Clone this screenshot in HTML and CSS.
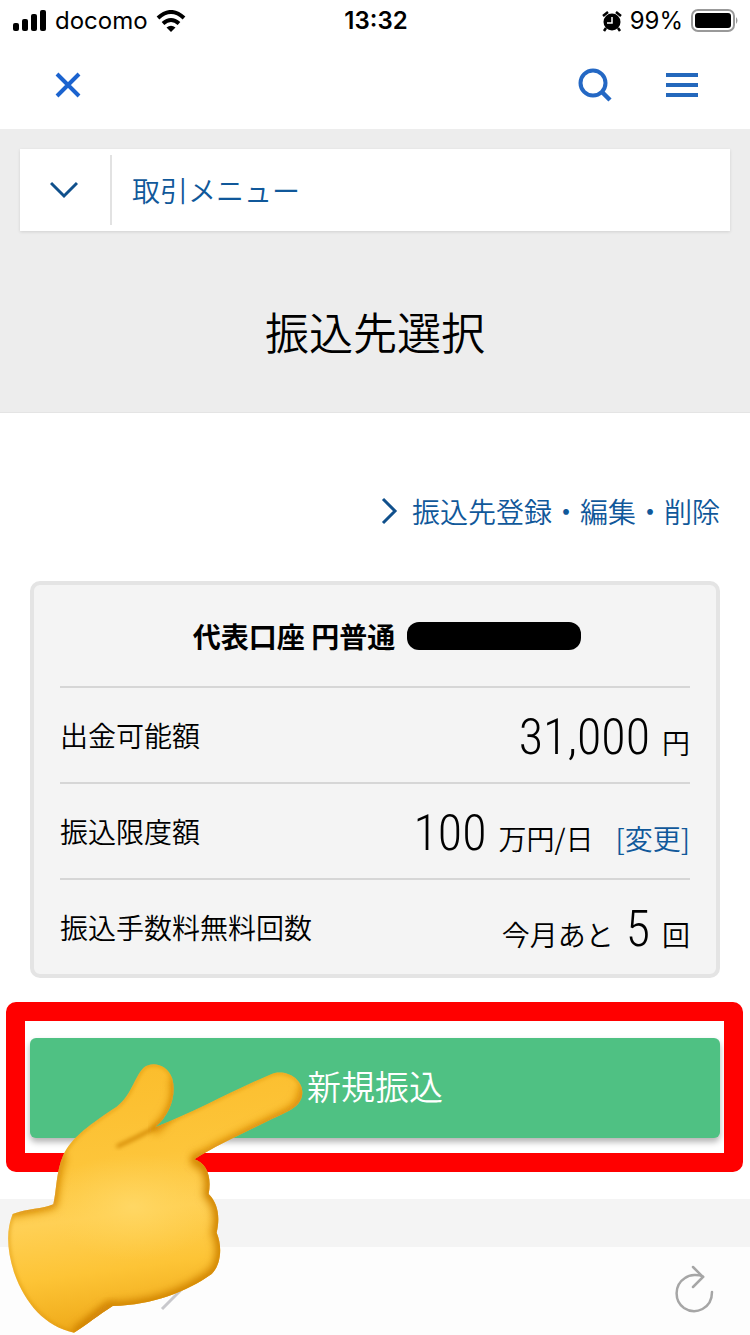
FILE: index.html
```html
<!DOCTYPE html>
<html lang="ja">
<head>
    <meta charset="UTF-8">
    <meta name="viewport" content="width=device-width, initial-scale=1.0">
    <title>振込先選択</title>
    <link rel="stylesheet" href="styles.css">
</head>
<body>
    <div class="status-bar">
        <div class="status-left">
            <svg width="34" height="22" viewBox="0 0 34 22" aria-hidden="true">
                <rect x="0" y="13" width="6" height="8" rx="2"/>
                <rect x="9" y="9" width="6" height="12" rx="2"/>
                <rect x="18" y="4" width="6" height="17" rx="2"/>
                <rect x="27" y="0" width="6" height="21" rx="2"/>
            </svg>
            <span class="carrier">docomo</span>
            <svg width="30" height="22" viewBox="0 0 30 22" aria-hidden="true">
                <g fill="none" stroke="#000" stroke-width="4">
                    <path d="M2 8 Q15 -4 28 8"/>
                    <path d="M7 13.500 Q15 6.500 23 13.500"/>
                </g>
                <path d="M10.500 17.500 Q15 14 19.500 17.500 L15 22 Z"/>
            </svg>
        </div>
        <div class="time">13:32</div>
        <div class="status-right">
            <svg width="20" height="21" viewBox="0 0 20 21" aria-hidden="true">
                <circle cx="10" cy="11" r="8.500"/>
                <path d="M4 17 L2 20 M16 17 L18 20 M1 5 L6 1 M19 5 L14 1" stroke="#000" stroke-width="2.500"/>
                <path d="M10 6 V12 H5" fill="none" stroke="#fff" stroke-width="1.500"/>
            </svg>
            <span class="percent">99%</span>
            <svg width="48" height="24" viewBox="0 0 48 24" aria-hidden="true">
                <rect x="1" y="1" width="42" height="21" rx="6" fill="none" stroke="#999" stroke-width="2"/>
                <rect x="4" y="4" width="36" height="15" rx="3"/>
                <path d="M45 8 Q48 11.500 45 15 Z" fill="#999"/>
            </svg>
        </div>
    </div>

    <header class="nav-bar">
        <button type="button" class="icon-btn" aria-label="閉じる">
            <svg width="26" height="26" viewBox="0 0 26 26">
                <path d="M2 2 L24 24 M24 2 L2 24" fill="none" stroke="#1b63cf" stroke-width="4"/>
            </svg>
        </button>
        <div class="nav-right">
            <button type="button" class="icon-btn" aria-label="検索">
                <svg width="34" height="34" viewBox="0 0 34 34">
                    <circle cx="15" cy="15" r="12.500" fill="none" stroke="#2468c4" stroke-width="4"/>
                    <path d="M23.500 23.500 L32 32" stroke="#2468c4" stroke-width="4.500"/>
                </svg>
            </button>
            <button type="button" class="icon-btn" aria-label="メニュー">
                <svg width="32" height="26" viewBox="0 0 32 26">
                    <path d="M0 3 H32 M0 13 H32 M0 23 H32" stroke="#2468bc" stroke-width="4"/>
                </svg>
            </button>
        </div>
    </header>

    <section class="hero">
        <button type="button" class="trade-menu">
            <span class="trade-arrow">
                <svg width="28" height="18" viewBox="0 0 28 18">
                    <path d="M1 2 L14 15 L27 2" fill="none" stroke="#10508c" stroke-width="3"/>
                </svg>
            </span>
            <span class="trade-label">取引メニュー</span>
        </button>
        <h1>振込先選択</h1>
    </section>

    <main>
        <div class="edit-row">
            <a href="#" class="edit-link">
                <svg width="17" height="28" viewBox="0 0 17 28" aria-hidden="true">
                    <path d="M2 2 L14 14 L2 26" fill="none" stroke="#10508c" stroke-width="3"/>
                </svg>
                振込先登録・編集・削除
            </a>
        </div>

        <section class="account">
            <h2>代表口座 円普通 <span class="masked"></span></h2>
            <dl>
                <div class="row">
                    <dt>出金可能額</dt>
                    <dd><span class="num">31,000</span> <span>円</span></dd>
                </div>
                <div class="row">
                    <dt>振込限度額</dt>
                    <dd><span class="num">100</span> <span>万円/日</span> <a href="#" class="change">[変更]</a></dd>
                </div>
                <div class="row">
                    <dt>振込手数料無料回数</dt>
                    <dd><span>今月あと</span> <span class="num">5</span> <span>回</span></dd>
                </div>
            </dl>
        </section>

        <div class="highlight">
            <button type="button" class="primary">新規振込</button>
        </div>
    </main>

    <div class="band"></div>

    <footer class="toolbar">
        <button type="button" class="icon-btn" aria-label="進む">
            <svg width="24" height="44" viewBox="0 0 24 44">
                <path d="M2 2 L22 22 L2 42" fill="none" stroke="#c8c8cc" stroke-width="3"/>
            </svg>
        </button>
        <button type="button" class="icon-btn" aria-label="再読み込み">
            <svg width="40" height="48" viewBox="0 0 40 48">
                <path d="M28 11.500 C24 9.500 15 9 10 13 C-1 20 -1 36 9 43 C21 51 37 43 37 27" fill="none" stroke="#a6a6a6" stroke-width="2.500" stroke-linecap="round"/>
                <path d="M18 2 L28 12 L18 22" fill="none" stroke="#a6a6a6" stroke-width="2.500" stroke-linecap="round"/>
            </svg>
        </button>

        <!-- pointing hand -->
        <svg class="hand" width="320" height="345" viewBox="0 0 960 1035" aria-hidden="true">
            <defs>
                <linearGradient id="skin" x1="0.350" y1="0" x2="0.500" y2="1">
                    <stop offset="0" stop-color="#fbbd2c"/>
                    <stop offset="0.350" stop-color="#fdc53a"/>
                    <stop offset="0.550" stop-color="#ffd055"/>
                    <stop offset="0.750" stop-color="#fdc436"/>
                    <stop offset="1" stop-color="#eca413"/>
                </linearGradient>
                <radialGradient id="glow">
                    <stop offset="0" stop-color="#ffd764"/>
                    <stop offset="1" stop-color="#ffd050" stop-opacity="0"/>
                </radialGradient>
                <filter id="soft" x="-20%" y="-20%" width="140%" height="140%">
                    <feGaussianBlur stdDeviation="13"/>
                </filter>
                <filter id="edge" x="-20%" y="-20%" width="140%" height="140%">
                    <feGaussianBlur stdDeviation="6"/>
                </filter>
                <path id="shape" d="M38 672 C80 656 130 657 160 643 C170 600 168 545 190 495 C215 440 275 400 350 350 C393 318 402 264 430 234 C455 212 502 222 517 266 C530 315 510 375 465 412 C585 365 700 300 810 254 C852 235 905 262 907 305 C908 350 862 364 820 385 C740 425 650 465 583 508 C620 520 636 560 626 612 C654 640 661 680 650 728 C668 770 663 825 635 852 C560 905 460 945 338 948 C295 975 262 1003 222 1028 C135 1010 75 940 43 850 C20 780 18 720 38 672 Z"/>
                <clipPath id="inside"><use href="#shape"/></clipPath>
            </defs>
            <use href="#shape" fill="url(#skin)"/>
            <g clip-path="url(#inside)" fill="none">
                <ellipse cx="400" cy="650" rx="260" ry="160" fill="url(#glow)"/>
                <path d="M520 266 C538 325 505 390 458 424" stroke="#d78a08" stroke-width="24" filter="url(#soft)"/>
                <path d="M907 290 C915 352 862 368 820 389 C740 428 650 469 575 514" stroke="#dc8e08" stroke-width="26" filter="url(#soft)"/>
                <path d="M583 508 C622 520 640 560 628 612 C657 640 664 680 652 728 C672 770 666 825 637 854 C560 910 460 950 338 952 C295 979 262 1007 222 1034" stroke="#cf8206" stroke-width="34" filter="url(#soft)"/>
                <path d="M240 1028 C280 985 320 955 335 940" stroke="#d08208" stroke-width="20" filter="url(#soft)"/>
                <path d="M36 670 C80 656 130 657 160 643 C168 600 168 545 190 495" stroke="#d88c0a" stroke-width="22" filter="url(#soft)"/>
                <path d="M350 470 C390 452 430 432 470 410" stroke="#cf8408" stroke-width="10" filter="url(#edge)"/>
                <use href="#shape" stroke="#d88f12" stroke-width="6" filter="url(#edge)"/>
            </g>
        </svg>
    </footer>
</body>
</html>
```
FILE: styles.css
```css
* {
    box-sizing: border-box;
}
body {
    margin: 0;
    font-family: 'Noto Sans CJK JP', sans-serif;
    font-weight: 350;
    font-size: 28px;
    line-height: 40px;
    color: #000;
    background-color: #fff;
}
h1, h2, dl, dt, dd {
    margin: 0;
}
svg {
    display: block;
    flex: none;
}
a {
    color: #10589a;
    text-decoration: none;
}
button {
    font: inherit;
    border: none;
    padding: 0;
    cursor: pointer;
}
.icon-btn {
    background: none;
}

/* status bar */
.status-bar {
    display: grid;
    grid-template-columns: 1fr auto 1fr;
    align-items: center;
    height: 42px;
    padding: 0 11px 0 13px;
    font-family: Inter, sans-serif;
    font-size: 24px;
    font-weight: 400;
}
.status-left, .status-right {
    display: flex;
    align-items: center;
    gap: 8px;
}
.status-right {
    justify-content: flex-end;
}
.time {
    font-weight: 600;
}

/* browser header */
.nav-bar {
    display: flex;
    justify-content: space-between;
    align-items: center;
    height: 87px;
    padding: 0 52px 2px 55px;
}
.nav-right {
    display: flex;
    align-items: center;
    gap: 54px;
}

.hero {
    padding: 20px 20px 51px;
    background-color: #ededed;
    border-bottom: 1px solid #e4e4e4;
}
.trade-menu {
    display: flex;
    align-items: center;
    width: 100%;
    height: 82px;
    background-color: #fff;
    box-shadow: 0 1px 3px rgba(0, 0, 0, 0.12);
    color: #10589a;
}
.trade-arrow {
    display: flex;
    align-items: center;
    justify-content: center;
    width: 92px;
    height: 70px;
    padding-right: 2px;
    border-right: 2px solid #e2e2e2;
}
.trade-label {
    padding-left: 20px;
}
h1 {
    margin-top: 70px;
    font-size: 44px;
    font-weight: 350;
    line-height: 60px;
    text-align: center;
}

.edit-row {
    display: flex;
    justify-content: flex-end;
    padding: 78px 30px 50px;
}
.edit-link {
    display: flex;
    align-items: center;
    gap: 14px;
}

/* account card */
.account {
    margin: 0 30px;
    padding: 0 26px;
    background-color: #f4f4f4;
    border: 4px solid #e4e4e4;
    border-radius: 10px;
}
h2 {
    display: flex;
    align-items: center;
    justify-content: center;
    gap: 12px;
    height: 101px;
    padding-left: 24px;
    font-size: 28px;
    font-weight: 700;
}
.masked {
    width: 174px;
    height: 28px;
    background-color: #000;
    border-radius: 12px;
}
.row {
    display: flex;
    justify-content: space-between;
    align-items: center;
    height: 96px;
    border-top: 2px solid #d6d6d6;
}
dd {
    display: flex;
    align-items: baseline;
    gap: 12px;
    padding-top: 4px;
}
.num {
    font-family: 'Roboto Condensed', 'Liberation Sans Narrow', Roboto, sans-serif;
    font-size: 50px;
    font-weight: 300;
    line-height: 60px;
}
.change {
    padding-left: 10px;
}

.highlight {
    margin: 24px 7px 27px 6px;
    padding: 17px 4px 15px 5px;
    border: 19px solid #f00;
    border-radius: 10px;
}
.primary {
    display: block;
    width: 100%;
    height: 100px;
    padding-bottom: 4px;
    background-color: #4fc183;
    border-radius: 6px;
    box-shadow: 0 4px 6px rgba(0, 0, 0, 0.3);
    color: #fff;
    font-size: 34px;
}

.band {
    height: 48px;
    background-color: #f4f4f4;
}
.toolbar {
    position: relative;
    display: flex;
    justify-content: space-between;
    align-items: center;
    height: 88px;
    padding: 0 35px 4px 160px;
    background-color: #fdfdfd;
}
.hand {
    position: absolute;
    left: 0;
    bottom: 0;
}
```
